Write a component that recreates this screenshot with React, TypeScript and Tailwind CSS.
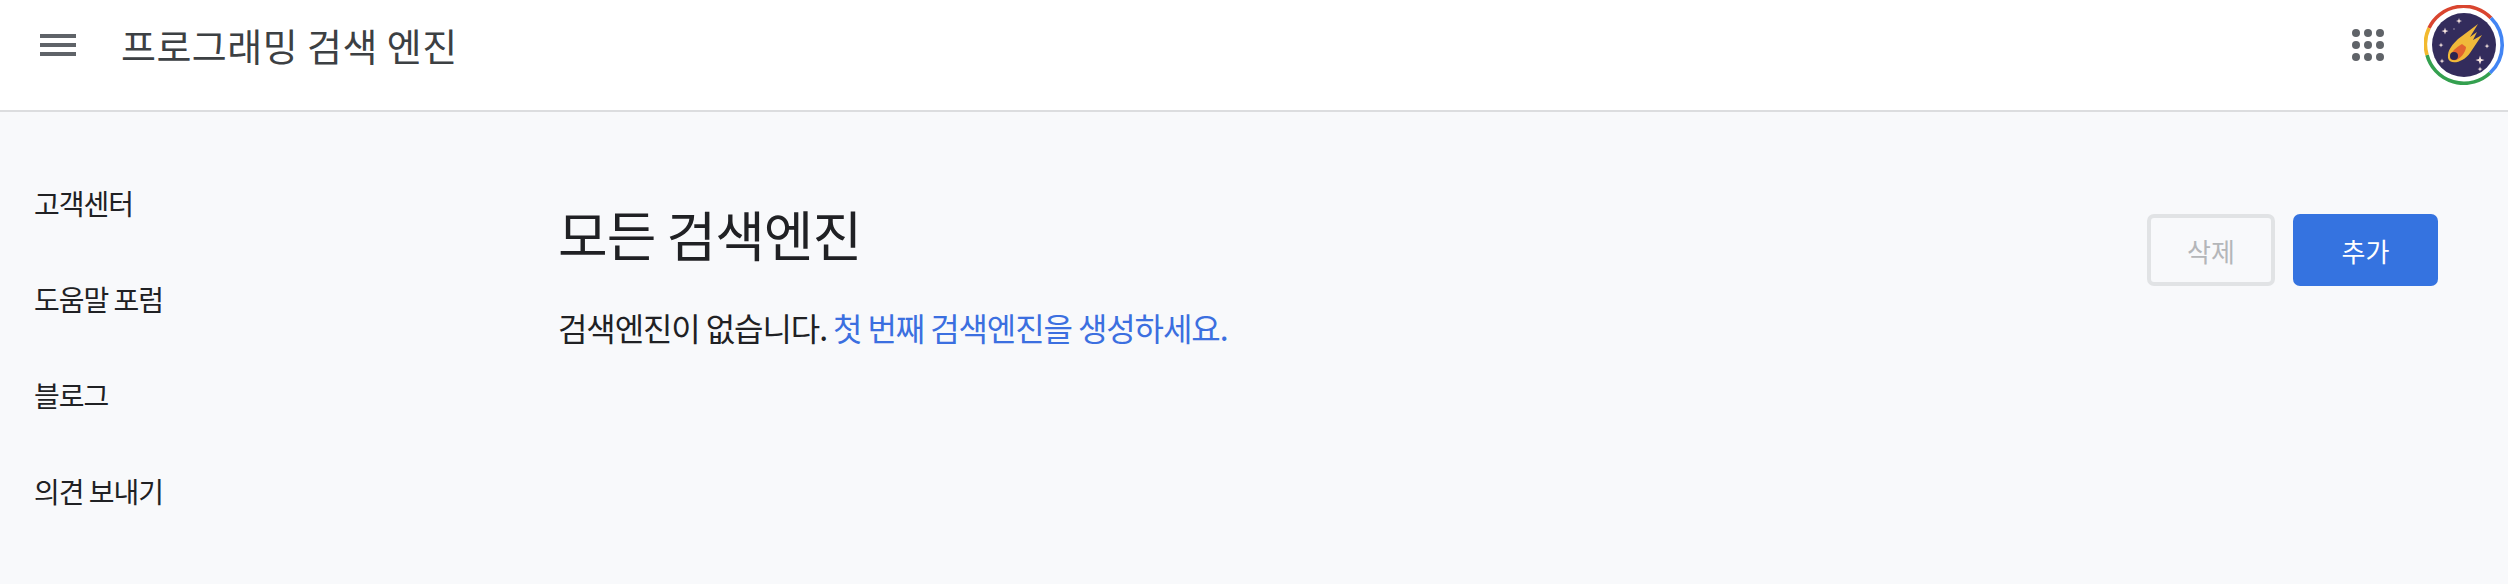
const font = "font-['Noto_Sans_CJK_KR','Noto_Sans_KR',sans-serif]";

const sideLinks = ["고객센터", "도움말 포럼", "블로그", "의견 보내기"];

function Avatar() {
  const stars = [
    [-19, -14, 3.5], [-5, -24, 3], [-23, 0, 2.5], [23, 1, 2.5], [-22, 16, 2.5], [16, 24, 2.5], [16, 15, 4.5], [5, 24, 0], [-10, -16, 1],
  ];
  return (
    <svg width="80" height="80" viewBox="-40 -40 80 80" className="shrink-0">
      {/* google colored ring */}
      <g fill="none" strokeWidth="3.6">
        <path d="M -35 -17 A 38.2 38.2 0 0 1 27 -27" stroke="#d9452f" />
        <path d="M 27 -27 A 38.2 38.2 0 0 1 26 28" stroke="#4285f4" />
        <path d="M 26 28 A 38.2 38.2 0 0 1 -37 10" stroke="#34a04f" />
        <path d="M -37 10 A 38.2 38.2 0 0 1 -35 -17" stroke="#f2b92f" />
      </g>
      <circle r="32" fill="#332c5c" />
      {stars.map(([x, y, r], i) => (
        <path
          key={i}
          d={`M ${x} ${y - r} L ${x + r / 4} ${y - r / 4} L ${x + r} ${y} L ${x + r / 4} ${y + r / 4} L ${x} ${y + r} L ${x - r / 4} ${y + r / 4} L ${x - r} ${y} L ${x - r / 4} ${y - r / 4} Z`}
          fill="#f8e6e0"
        />
      ))}
      {/* comet */}
      <path
        d="M -16 13 C -17 5 -11 -1 -6 -6 L 14 -21 L 6 -8 L 13 -13 L 9 -5 L 18 -10 L 6 8 C 0 17 -14 21 -16 13 Z"
        fill="#f0b93a"
      />
      <path d="M -14 13 C -13 6 -7 2 -2 -1 L 2 2 C 2 9 -9 20 -14 13 Z" fill="#e2622f" />
      <circle cx="-10" cy="11" r="4" fill="#2b2350" />
    </svg>
  );
}

export default function App() {
  return (
    <div className={`${font} w-[2508px] h-[584px] bg-[#f8f9fb] flex flex-col overflow-hidden`}>
      <header className="h-[112px] shrink-0 bg-white border-b-2 border-[#dcdddf] flex items-center pl-10 pr-[4px] pb-[20px]">
        <div className="w-[36px] flex flex-col gap-[5px] shrink-0">
          <span className="block h-[4px] bg-[#5f6368]" />
          <span className="block h-[4px] bg-[#5f6368]" />
          <span className="block h-[4px] bg-[#5f6368]" />
        </div>
        <div className="ml-[45px] text-[38px] leading-none text-[#3c4043] tracking-[0.45px]">프로그래밍 검색 엔진</div>
        <div className="ml-auto flex items-center gap-[40px]">
          <div className="grid grid-cols-3 gap-[4px] w-[32px]">
            {Array.from({ length: 9 }).map((_, i) => (
              <span key={i} className="block w-[8px] h-[8px] rounded-full bg-[#5f6368]" />
            ))}
          </div>
          <Avatar />
        </div>
      </header>
      <div className="flex flex-1">
        <nav className="w-[558px] shrink-0 pl-[34px] pt-[73px] flex flex-col gap-[60px]">
          {sideLinks.map((l) => (
            <a key={l} className="block text-[28px] leading-[36px] text-[#202124] tracking-[-1px]">
              {l}
            </a>
          ))}
        </nav>
        <main className="flex-1 flex items-start justify-between pr-[70px]">
          <div className="pt-[90px]">
            <h1 className="text-[54px] leading-[64px] text-[#202124] tracking-[-1px]">모든 검색엔진</h1>
            <p className="mt-[40px] text-[32px] leading-[42px] text-[#202124] tracking-[-1.1px]">
              검색엔진이 없습니다. <a className="text-[#3b6fe0]">첫 번째 검색엔진을 생성하세요.</a>
            </p>
          </div>
          <div className="pt-[102px] flex gap-[18px]">
            <button className="w-[128px] h-[72px] rounded-[7px] border-4 border-[#e1e3e5] text-[26px] text-[#b4b6b9]">삭제</button>
            <button className="w-[145px] h-[72px] rounded-[7px] bg-[#3573e0] text-[26px] text-white">추가</button>
          </div>
        </main>
      </div>
    </div>
  );
}
